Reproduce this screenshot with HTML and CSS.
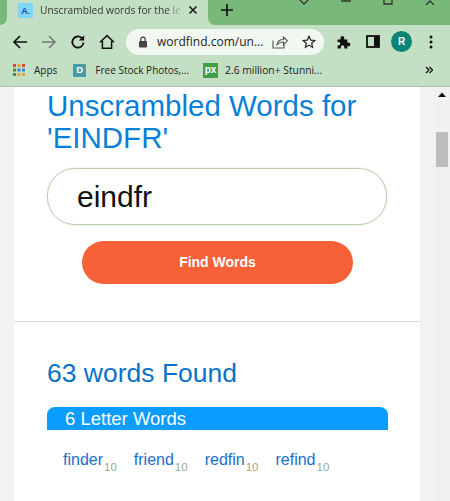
FILE: index.html
```html
<!DOCTYPE html>
<html lang="en">
<head>
  <meta charset="UTF-8" />
  <title>Unscrambled words</title>
  <link rel="stylesheet" href="styles.css">
</head>
<body>
  <div class="browser">
    <div class="tabstrip">
      <div class="tab-gap-left"></div>
      <div class="tab">
        <span class="favicon">A<small>.</small></span>
        <span class="tab-title">Unscrambled words for the le</span>
        <svg class="tab-close" width="10" height="10" viewBox="0 0 10 10"><path d="M1.500 1.500l7 7M8.500 1.500l-7 7" stroke="#1c1c1c" stroke-width="1.600"/></svg>
      </div>
      <div class="tab-rest">
        <svg class="new-tab" width="12" height="12" viewBox="0 0 12 12"><path d="M6 0v12M0 6h12" stroke="#111" stroke-width="1.700"/></svg>
        <div class="window-btns">
          <svg width="10" height="5" viewBox="0 0 10 5"><path d="M1 0l4 4 4-4" fill="none" stroke="#333" stroke-width="1.300"/></svg>
          <svg width="10" height="5" viewBox="0 0 10 5"><path d="M0 1h10" stroke="#222" stroke-width="1.300"/></svg>
          <svg width="10" height="5" viewBox="0 0 10 5"><path d="M1 0v4h8V0" fill="none" stroke="#333" stroke-width="1.300"/></svg>
          <svg width="10" height="5" viewBox="0 0 10 5"><path d="M1 5l4-4 4 4" fill="none" stroke="#333" stroke-width="1.300"/></svg>
        </div>
      </div>
    </div>

    <div class="toolbar">
      <svg class="tool" width="16" height="16" viewBox="0 0 16 16"><path d="M15 8H2M8 2L2 8l6 6" fill="none" stroke="#111" stroke-width="1.700"/></svg>
      <svg class="tool" width="16" height="16" viewBox="0 0 16 16"><path d="M1 8h13M8 2l6 6-6 6" fill="none" stroke="#777" stroke-width="1.600"/></svg>
      <svg class="tool" width="16" height="16" viewBox="0 0 16 16"><path d="M13.500 8.500A5.600 5.600 0 1 1 11.800 4" fill="none" stroke="#111" stroke-width="1.800"/><path d="M14.200 1.200v5.400H8.800z" fill="#111"/></svg>
      <svg class="tool" width="16" height="16" viewBox="0 0 16 16"><path d="M1 8.200L8 1.600l7 6.600M3.400 7v7.200h9.200V7" fill="none" stroke="#111" stroke-width="1.500"/></svg>
      <div class="omnibox">
        <svg class="lock" width="10" height="12" viewBox="0 0 10 12"><rect x="1" y="5" width="8" height="6.500" rx="1" fill="#444"/><path d="M2.800 5V3.400a2.200 2.200 0 0 1 4.400 0V5" fill="none" stroke="#444" stroke-width="1.200"/></svg>
        <span class="url">wordfind.com/un...</span>
        <svg class="share" width="16" height="14" viewBox="0 0 16 14"><path d="M1 5.500v7.500h11V9M5 9.500c.6-3.400 3-5 6.500-5V2l4 3.800-4 3.700V7C9 7 6.800 7.600 5 9.500z" fill="none" stroke="#555" stroke-width="1.100"/></svg>
        <svg class="star" width="14" height="14" viewBox="0 0 14 14"><path d="M7 1.300l1.700 3.800 4.100.4-3.100 2.700.9 4-3.600-2.100-3.600 2.100.9-4L1.200 5.500l4.100-.4z" fill="none" stroke="#222" stroke-width="1.200"/></svg>
      </div>
      <svg class="ext" width="14" height="14" viewBox="0 0 14 14"><path d="M0.500 4.500h3V3a1.900 1.900 0 0 1 3.800 0v1.500h3v3h1.200a1.900 1.900 0 0 1 0 3.800h-1.200v2.300h-3V12a1.700 1.700 0 0 0-3.400 0v1.600H.5v-3h1a1.800 1.800 0 0 0 0-3.600h-1z" fill="#111"/></svg>
      <svg class="side" width="14" height="13" viewBox="0 0 14 13"><rect x="1" y="1" width="12" height="11" fill="none" stroke="#111" stroke-width="1.800"/><rect x="8" y="1" width="5" height="11" fill="#111"/></svg>
      <span class="avatar">R</span>
      <svg class="menu" width="4" height="14" viewBox="0 0 4 14"><circle cx="2" cy="2" r="1.500" fill="#111"/><circle cx="2" cy="7" r="1.500" fill="#111"/><circle cx="2" cy="12" r="1.500" fill="#111"/></svg>
    </div>

    <div class="bookmarks">
      <svg width="12" height="12" viewBox="0 0 12 12">
        <rect x="0" y="0" width="3" height="3" fill="#d9453a"/><rect x="4.500" y="0" width="3" height="3" fill="#e8a33d"/><rect x="9" y="0" width="3" height="3" fill="#d9453a"/>
        <rect x="0" y="4.500" width="3" height="3" fill="#3f8f4a"/><rect x="4.500" y="4.500" width="3" height="3" fill="#3d7fd9"/><rect x="9" y="4.500" width="3" height="3" fill="#3d7fd9"/>
        <rect x="0" y="9" width="3" height="3" fill="#3f8f4a"/><rect x="4.500" y="9" width="3" height="3" fill="#e8a33d"/><rect x="9" y="9" width="3" height="3" fill="#e8a33d"/>
      </svg>
      <span class="bm-apps">Apps</span>
      <span class="bm-icon-d">D</span>
      <span class="bm-stock">Free Stock Photos,...</span>
      <span class="bm-icon-px">px</span>
      <span class="bm-million">2.6 million+ Stunni...</span>
      <svg class="bm-more" width="8" height="8" viewBox="0 0 8 8"><path d="M1 1l3 3-3 3M4.500 1l3 3-3 3" fill="none" stroke="#111" stroke-width="1.300"/></svg>
    </div>
  </div>

  <div class="viewport">
    <div class="page">
      <div class="search-section">
        <h1>Unscrambled Words for 'EINDFR'</h1>
        <div class="search-input">eindfr</div>
        <div class="find-btn">Find Words</div>
      </div>
      <div class="results">
        <h2>63 words Found</h2>
        <div class="group-title">6 Letter Words</div>
        <ul class="word-list">
          <li><a>finder</a><sub>10</sub></li>
          <li><a>friend</a><sub>10</sub></li>
          <li><a>redfin</a><sub>10</sub></li>
          <li><a>refind</a><sub>10</sub></li>
        </ul>
      </div>
    </div>
    <div class="right-gutter"></div>
    <div class="scrollbar">
      <svg width="8" height="5" viewBox="0 0 8 5"><path d="M0 5l4-4.500L8 5z" fill="#111"/></svg>
      <div class="thumb"></div>
    </div>
  </div>
</body>
</html>
```

FILE: styles.css
```css
html, body {
  margin: 0;
  padding: 0;
  height: 501px;
  overflow: hidden;
}

body {
  font-family: "Liberation Sans", Arial, sans-serif;
  background-color: #f2f2f2;
  display: flex;
  flex-direction: column;
}

/* browser chrome */
.browser {
  background-color: #c4e0c4;
  font-family: "Open Sans", sans-serif;
  color: #222;
  border-bottom: 1px solid #a9c4a9;
}

.tabstrip {
  display: flex;
  height: 25px;
}

.tab-gap-left {
  width: 7px;
  background-color: #78b97a;
  border-bottom-right-radius: 7px;
}

.tab {
  width: 201px;
  display: flex;
  align-items: center;
  padding-left: 11px;
  padding-bottom: 5px;
  box-sizing: border-box;
  font-size: 10.2px;
}

.favicon {
  width: 15px;
  height: 15px;
  background-color: #7fd6f5;
  color: #1a4fa8;
  font: bold 9px "Liberation Sans", sans-serif;
  text-align: center;
  line-height: 16px;
  flex-shrink: 0;
}

.favicon small {
  font-size: 8px;
}

.tab-title {
  width: 143px;
  margin-left: 7px;
  white-space: nowrap;
  color: #333;
  -webkit-mask-image: linear-gradient(to right, #000 88%, transparent);
  mask-image: linear-gradient(to right, #000 88%, transparent);
}

.tab-close {
  margin-left: 5px;
}

.tab-rest {
  flex: 1;
  background-color: #78b97a;
  border-bottom-left-radius: 7px;
  display: flex;
  justify-content: space-between;
  padding-left: 13px;
  padding-right: 15px;
}

.new-tab {
  margin-top: 4px;
}

.window-btns {
  display: flex;
}

.window-btns svg {
  margin-left: 32px;
}

.toolbar {
  height: 33px;
  display: flex;
  align-items: center;
  padding-left: 12px;
}

.tool {
  margin-right: 13px;
  flex-shrink: 0;
}

.omnibox {
  width: 198px;
  height: 26px;
  margin-left: -2px;
  background-color: #f1f7f1;
  border-radius: 13px;
  display: flex;
  align-items: center;
  box-sizing: border-box;
  padding-left: 12px;
  font-size: 12px;
  color: #222;
}

.url {
  width: 110px;
  margin-left: 9px;
  white-space: nowrap;
}

.share {
  margin-left: 5px;
}

.star {
  margin-left: 14px;
}

.ext {
  margin-left: 13px;
}

.side {
  margin-left: 15px;
}

.avatar {
  width: 21px;
  height: 21px;
  margin-left: 11px;
  border-radius: 50%;
  background-color: #0b8577;
  color: #fff;
  font: bold 10px "Liberation Sans", sans-serif;
  line-height: 21px;
  text-align: center;
}

.menu {
  margin-left: 17px;
}

.bookmarks {
  height: 28px;
  display: flex;
  align-items: center;
  padding: 0 17px 4px 13px;
  box-sizing: border-box;
  font-size: 10px;
  white-space: nowrap;
}

.bm-apps {
  margin-left: 9px;
}

.bm-icon-d {
  width: 13px;
  height: 13px;
  margin-left: 16px;
  background-color: #4a9aa5;
  color: #fff;
  font: bold 9px "Liberation Sans", sans-serif;
  line-height: 13px;
  text-align: center;
}

.bm-stock {
  margin-left: 9px;
}

.bm-icon-px {
  width: 15px;
  height: 15px;
  margin-left: 14px;
  background-color: #3f9e4b;
  color: #fff;
  font: bold 10px "Liberation Sans", sans-serif;
  line-height: 14px;
  text-align: center;
}

.bm-million {
  margin-left: 7px;
  font-size: 10.3px;
}

.bm-more {
  margin-left: auto;
}

/* page */
.viewport {
  flex: 1;
  display: flex;
  min-height: 0;
}

.page {
  width: 406px;
  margin-left: 14px;
  background-color: #fff;
  overflow: hidden;
}

.search-section {
  padding: 3px 33px 0;
  height: 235px;
  box-sizing: border-box;
  border-bottom: 1px solid #dcdcdc;
}

h1 {
  margin: 0;
  font-size: 29.5px;
  font-weight: normal;
  line-height: 32px;
  color: #0a7fd6;
}

.search-input {
  width: 340px;
  height: 57px;
  margin-top: 14px;
  box-sizing: border-box;
  border: 1px solid #b9cfae;
  border-radius: 28px;
  box-shadow: 0 0 2px #c9d8c0;
  padding-left: 29px;
  font-size: 30px;
  line-height: 55px;
  color: #111;
}

.find-btn {
  width: 271px;
  height: 43px;
  margin: 16px 0 0 35px;
  border-radius: 22px;
  background-color: #f66137;
  color: #fff;
  font-size: 14px;
  font-weight: bold;
  text-align: center;
  line-height: 42px;
}

.results {
  padding: 36px 33px 0;
}

h2 {
  margin: 0;
  font-size: 26.5px;
  font-weight: normal;
  line-height: 30px;
  color: #0b72c7;
}

.group-title {
  width: 341px;
  height: 23px;
  margin-top: 19px;
  padding-left: 18px;
  box-sizing: border-box;
  background-color: #0a9dff;
  border-radius: 8px 8px 0 0;
  color: #fff;
  font-size: 18.5px;
  line-height: 24px;
}

.word-list {
  list-style: none;
  margin: 21px 0 0;
  padding: 0 0 0 16px;
  display: flex;
  gap: 17px;
}

.word-list a {
  color: #1a6fc9;
  font-size: 16px;
}

.word-list sub {
  margin-left: 1px;
  color: #9aa88f;
  font-size: 11.5px;
  line-height: 0;
  vertical-align: -6px;
}

.right-gutter {
  width: 14px;
}

.scrollbar {
  width: 16px;
  background-color: #f1f1f1;
  display: flex;
  flex-direction: column;
  align-items: center;
  padding-top: 5px;
  box-sizing: border-box;
}

.thumb {
  width: 12px;
  height: 35px;
  margin-top: 35px;
  background-color: #bdbdbd;
}
```
